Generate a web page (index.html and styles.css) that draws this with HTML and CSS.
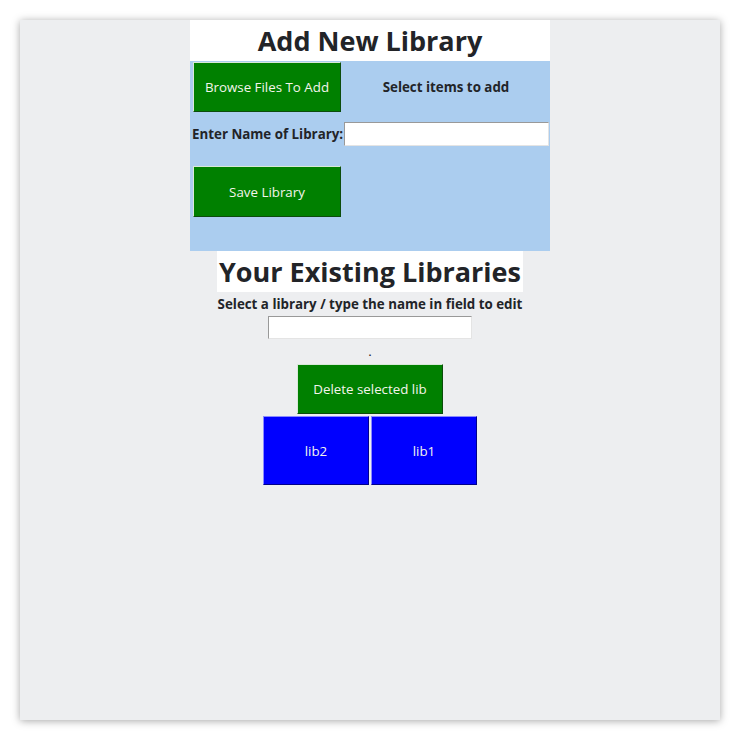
FILE: index.html
```html
<!DOCTYPE html>
<html>
<head>
<meta charset="utf-8">
<link rel="stylesheet" href="styles.css">
</head>
<body>
<div class="window">
  <div class="column">
    <h1 class="title">Add New Library</h1>
    <div class="panel">
      <button class="btn green browse">Browse Files To Add</button>
      <div class="hint">Select items to add</div>
      <label class="label">Enter Name of Library:</label>
      <input class="field name-field" type="text">
      <button class="btn green save">Save Library</button>
    </div>
  </div>
  <h2 class="title existing">Your Existing Libraries</h2>
  <div class="sub">Select a library / type the name in field to edit</div>
  <input class="field edit-field" type="text">
  <div class="dot">.</div>
  <button class="btn green delete">Delete selected lib</button>
  <div class="libs">
    <button class="btn blue lib">lib2</button>
    <button class="btn blue lib">lib1</button>
  </div>
</div>
</body>
</html>
```
FILE: styles.css
```css
html, body {
  margin: 0;
  padding: 0;
  background: #ffffff;
}
body {
  font-family: "Open Sans", "Noto Sans", sans-serif;
  color: #222428;
}
.window {
  margin: 20px;
  width: 700px;
  height: 700px;
  background: #edeef0;
  box-shadow: 0 1px 8px rgba(0, 0, 0, 0.35);
  display: flex;
  flex-direction: column;
  align-items: center;
}
.column {
  width: 360px;
  display: flex;
  flex-direction: column;
}
.title {
  margin: 0;
  background: #ffffff;
  font-size: 27px;
  font-weight: 700;
  line-height: 41px;
  text-align: center;
}
.existing {
  padding: 0 2px;
}
.panel {
  background: #abcdef;
  display: grid;
  grid-template-columns: 153px 1fr;
  align-items: center;
  padding: 1px 1px 34px 0;
}
.btn {
  font-family: "Open Sans", "Noto Sans", sans-serif;
  font-size: 13.33px;
  color: #f4f4ec;
  padding: 0;
  border-width: 1px;
  border-style: solid;
  cursor: pointer;
}
.green {
  background: #008000;
  border-color: #d8e8d8 #0c4c0c #0c4c0c #d8e8d8;
}
.blue {
  background: #0000ff;
  border-color: #8a8aff #00008a #00008a #8a8aff;
}
.browse {
  width: 148px;
  height: 50px;
  margin-left: 3px;
}
.hint {
  font-size: 13.33px;
  font-weight: 700;
  text-align: center;
}
.label {
  font-size: 13.33px;
  font-weight: 700;
  margin-top: 10px;
  padding-left: 2px;
  white-space: nowrap;
}
.field {
  box-sizing: border-box;
  background: #ffffff;
  border-width: 1px;
  border-style: solid;
  border-color: #999999 #e4e4e4 #e4e4e4 #999999;
  outline: none;
}
.name-field {
  margin-top: 10px;
  margin-left: 1px;
  width: 205px;
  height: 24px;
}
.save {
  grid-column: 1;
  width: 148px;
  height: 51px;
  margin-left: 3px;
  margin-top: 20px;
}
.sub {
  font-size: 13.33px;
  font-weight: 700;
  margin-top: 2px;
  line-height: 20px;
}
.edit-field {
  margin-top: 2px;
  width: 204px;
  height: 23px;
}
.dot {
  font-size: 13.33px;
  line-height: 25px;
}
.delete {
  width: 146px;
  height: 50px;
}
.libs {
  display: flex;
  gap: 2px;
  margin-top: 2px;
}
.lib {
  width: 106px;
  height: 69px;
}
```
